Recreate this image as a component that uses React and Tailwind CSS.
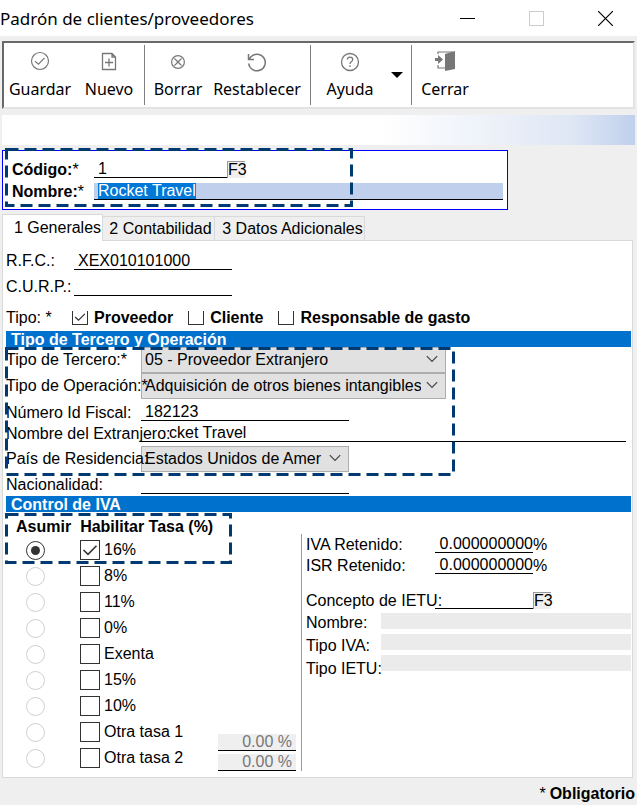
import React, { useEffect, useRef, useState } from 'react';

const RATES = ['16%', '8%', '11%', '0%', 'Exenta', '15%', '10%', 'Otra tasa 1', 'Otra tasa 2'];

function Chevron() {
  return (
    <svg viewBox="0 0 12 8" className="pointer-events-none absolute right-2 top-2 h-2 w-3" fill="none" stroke="#444" strokeWidth="1.2">
      <path d="M0.8 1.2 L6 6.4 L11.2 1.2" />
    </svg>
  );
}

function Check({ className }) {
  return (
    <svg viewBox="0 0 16 16" className={className} fill="none" stroke="#333" strokeWidth="1.6">
      <path d="M1.5 8 L6 12.3 L14.5 3.8" />
    </svg>
  );
}

function Marker({ className }) {
  return (
    <svg className={className} fill="none" aria-hidden="true">
      <rect x="0.5" y="0.5" width="100%" height="100%" stroke="#003a70" strokeWidth="3" strokeDasharray="12 6" />
    </svg>
  );
}

function Dropdown({ id, value, className }) {
  return (
    <div className={`relative h-[26px] ${className}`}>
      <select id={id} className="h-full w-full appearance-none border border-[#adadad] bg-[#e1e1e1] pl-[3px] pr-6 text-base leading-5 outline-none">
        <option>{value}</option>
      </select>
      <Chevron />
    </div>
  );
}

function LineInput({ className, ...rest }) {
  return <input {...rest} className={`h-[17px] border-b border-black leading-4 outline-none ${className}`} />;
}

function F3({ label }) {
  return (
    <button type="button" aria-label={label} className="flex h-[17px] w-[18px] items-center border-l border-t border-[#999] bg-[#efefef] leading-4">
      F3
    </button>
  );
}

function ToolButton({ label, children, className }) {
  return (
    <button type="button" className={`flex flex-col items-center font-['Noto_Sans'] leading-6 ${className}`}>
      <span className="flex h-8 items-center justify-center">{children}</span>
      {label}
    </button>
  );
}

function TypeCheck({ label, defaultChecked = false }) {
  return (
    <label className="flex items-center gap-1.5 font-bold">
      <span className="relative h-[14px] w-4">
        <input type="checkbox" defaultChecked={defaultChecked} className="peer block h-[14px] w-4 appearance-none border border-t-0 border-[#333]" />
        <Check className="pointer-events-none absolute left-0.5 top-0 hidden h-3 w-3 peer-checked:block" />
      </span>
      {label}
    </label>
  );
}

function SectionTitle({ children }) {
  return <h2 className="h-4 overflow-hidden bg-[#0072ce] pl-[5px] font-bold leading-[18px] text-white">{children}</h2>;
}

export default function App() {
  const nameRef = useRef(null);
  const [assumed, setAssumed] = useState('16%');

  useEffect(() => {
    nameRef.current.focus();
    nameRef.current.select();
  }, []);

  return (
    <div className="min-h-screen bg-[#efefef] font-['Liberation_Sans',sans-serif] text-base text-black">
      <header className="flex h-9 items-center justify-between bg-white">
        <h1 className="whitespace-nowrap pt-0.5 font-['Noto_Sans',sans-serif] text-[17px]">Padrón de clientes/proveedores</h1>
        <div className="flex items-center gap-[54px] pr-6">
          <button type="button" aria-label="Minimizar">
            <svg width="15" height="15" stroke="#000"><path d="M0 7.5H15" /></svg>
          </button>
          <button type="button" aria-label="Maximizar" disabled>
            <svg width="15" height="15" fill="none" stroke="#ccc"><rect x="0.5" y="0.5" width="14" height="14" /></svg>
          </button>
          <button type="button" aria-label="Cerrar ventana">
            <svg width="15" height="15" stroke="#000" strokeWidth="1.2"><path d="M0 0L15 15M15 0L0 15" /></svg>
          </button>
        </div>
      </header>

      <nav className="mx-0.5 mt-[5px] flex h-[68px] border-2 border-b-[#e3e3e3] border-l-[#696969] border-r-[#e3e3e3] border-t-[#696969] bg-white py-0.5">
        <div className="flex border-r border-[#808080] pl-1 pr-2">
          <ToolButton label="Guardar" className="w-16">
            <svg width="20" height="20" fill="none" stroke="#777" strokeWidth="1.2">
              <circle cx="10" cy="10" r="8.5" />
              <path d="M5 10.2L8.5 13.2L14.5 6.8" />
            </svg>
          </ToolButton>
          <ToolButton label="Nuevo" className="ml-2.5 w-[54px]">
            <svg width="16" height="20" fill="none" stroke="#777" strokeWidth="1.3">
              <path d="M1.5 2.5H11L14.5 6V18.5H1.5ZM11 2.5V6H14.5M8 7.5V15.5M4 11.5H12" />
            </svg>
          </ToolButton>
        </div>
        <div className="flex border-r border-[#808080] pl-2 pr-2">
          <ToolButton label="Borrar" className="w-[50px]">
            <svg width="16" height="16" className="mt-0.5" fill="none" stroke="#777" strokeWidth="1.2">
              <circle cx="8" cy="8" r="6.4" />
              <path d="M4.5 4.5L11.5 11.5M11.5 4.5L4.5 11.5" />
            </svg>
          </ToolButton>
          <ToolButton label="Restablecer" className="ml-[9px] w-[90px]">
            <svg width="20" height="20" className="mt-0.5" fill="none" stroke="#777" strokeWidth="1.5">
              <path d="M1.7 11.5A8.3 8.3 0 1 0 4 4.7L1.8 7.4M1.5 2V7.5H7" />
            </svg>
          </ToolButton>
        </div>
        <div className="flex border-r border-[#808080] pl-3 pr-2">
          <ToolButton label="Ayuda" className="w-[54px]">
            <svg width="20" height="20" className="mt-0.5" fill="none" stroke="#777" strokeWidth="1.3">
              <circle cx="10" cy="10" r="8.5" />
              <path d="M7.3 7.5Q7.5 5.2 10 5.2Q12.7 5.2 12.7 7.5Q12.7 8.8 11.3 9.7Q10 10.5 10 12M10 13.3V15" />
            </svg>
          </ToolButton>
          <button type="button" aria-label="Más ayuda" className="ml-3.5 w-3">
            <svg width="12" height="6"><path d="M0 0H12L6 6Z" /></svg>
          </button>
        </div>
        <ToolButton label="Cerrar" className="ml-2 w-[50px]">
          <svg width="20" height="20" fill="#777">
            <path d="M10 3L20 0V18L10 20Z" />
            <path d="M0 7H3V4L8 8.5L3 13V10H0Z" />
            <path d="M3 3V1H18M3 14V17H10" fill="none" stroke="#777" strokeWidth="1.2" />
          </svg>
        </ToolButton>
      </nav>

      <div className="mx-0.5 mt-1.5 h-[30px] bg-linear-to-r from-white from-60% via-[#dfe7f5] via-90% to-[#c0d0ec]" />

      <section className="relative mx-0.5 mt-[5px] h-[60px] max-w-[506px] border border-[#0000ff] bg-white pl-[9px] pr-1 pt-2.5">
        <div className="flex h-[22px] items-start">
          <label htmlFor="codigo" className="w-[82px] font-bold leading-[18px]"><span>Código:</span><span className="font-normal">*</span></label>
          <LineInput id="codigo" defaultValue="1" className="w-[133px] pl-1" />
          <F3 label="Buscar código F3" />
        </div>
        <div className="flex items-start">
          <label htmlFor="nombre" className="w-[82px] font-bold leading-[18px]"><span>Nombre:</span><span className="font-normal">*</span></label>
          <input
            id="nombre"
            ref={nameRef}
            defaultValue="Rocket Travel"
            className="h-[17px] min-w-0 flex-1 border-b border-black bg-[#c0d0ec] pl-1 leading-4 outline-none selection:bg-[#0078d7] selection:text-white"
          />
        </div>
        <Marker className="pointer-events-none absolute -top-0.5 left-[3px] h-[56px] w-[345px] overflow-visible" />
      </section>

      <div role="tablist" className="ml-0.5 mt-[5px] flex h-[25px] items-end whitespace-nowrap">
        <button type="button" role="tab" aria-selected="true" className="relative -mb-px h-[27px] w-[101px] border border-b-0 border-[#d9d9d9] bg-white pl-2.5 leading-6">1 Generales</button>
        <button type="button" role="tab" className="h-6 w-[112px] border-r border-t border-[#d9d9d9] pl-1 leading-6">2 Contabilidad</button>
        <button type="button" role="tab" className="h-6 w-[150px] border-r border-t border-[#d9d9d9] pl-1.5 leading-6">3 Datos Adicionales</button>
      </div>

      <main className="ml-0.5 mr-1 border border-[#d9d9d9] bg-white pb-1.5 pl-[3px] pr-px pt-[7px]">
        <div className="flex h-[26px] items-center">
          <label htmlFor="rfc" className="w-[68px]">R.F.C.:</label>
          <LineInput id="rfc" defaultValue="XEX010101000" className="w-[158px] pl-1" />
        </div>
        <div className="flex h-[26px] items-center">
          <label htmlFor="curp" className="w-[68px]">C.U.R.P.:</label>
          <LineInput id="curp" className="w-[158px] pl-1" />
        </div>
        <div className="flex h-[31px] items-center gap-[15px] pt-1">
          <span className="w-[51px]">Tipo: *</span>
          <TypeCheck label="Proveedor" defaultChecked />
          <TypeCheck label="Cliente" />
          <TypeCheck label="Responsable de gasto" />
        </div>

        <SectionTitle>Tipo de Tercero y Operación</SectionTitle>
        <section className="relative whitespace-nowrap">
          <div className="flex items-center">
            <label htmlFor="tercero" className="w-[135px]">Tipo de Tercero:*</label>
            <Dropdown id="tercero" value="05 - Proveedor Extranjero" className="w-[305px]" />
          </div>
          <div className="flex items-center">
            <label htmlFor="operacion" className="relative z-10 w-[135px]">Tipo de Operación:*</label>
            <Dropdown id="operacion" value="Adquisición de otros bienes intangibles" className="w-[305px]" />
          </div>
          <div className="mt-[3px] flex h-[21px] items-center">
            <label htmlFor="fiscal" className="w-[135px]">Número Id Fiscal:</label>
            <LineInput id="fiscal" defaultValue="182123" className="w-[208px] pl-1" />
          </div>
          <div className="flex h-[21px] items-center">
            <label htmlFor="extranjero" className="w-[135px]">Nombre del Extranjero:</label>
            <LineInput id="extranjero" defaultValue="cket Travel" className="mr-[5px] min-w-0 flex-1 pl-7" />
          </div>
          <div className="mt-0.5 flex items-center">
            <label htmlFor="pais" className="relative z-10 w-[135px]">País de Residencia:</label>
            <Dropdown id="pais" value="Estados Unidos de Amer" className="w-[208px]" />
          </div>
          <div className="flex h-6 items-end pb-0.5">
            <label htmlFor="nacionalidad" className="w-[135px] leading-[18px]">Nacionalidad:</label>
            <LineInput id="nacionalidad" className="w-[208px]" />
          </div>
          <Marker className="pointer-events-none absolute left-0 top-px z-20 h-[126px] w-[447px] overflow-visible" />
        </section>

        <SectionTitle>Control de IVA</SectionTitle>
        <section className="relative flex">
          <div className="flex w-[295px] justify-between pr-[5px]">
            <div className="whitespace-nowrap">
              <div className="flex h-[25px] items-center gap-[9px] pl-2.5 pt-1 font-bold">
                <span>Asumir</span>
                <span>Habilitar Tasa (%)</span>
              </div>
              {RATES.map((rate) => (
                <div key={rate} className="flex h-[26px] items-center pl-5">
                  <input
                    type="radio"
                    name="asumir"
                    aria-label={`Asumir ${rate}`}
                    checked={assumed === rate}
                    onChange={() => setAssumed(rate)}
                    className="h-[19px] w-[19px] appearance-none rounded-full border border-[#d0d0d0] bg-white bg-clip-content p-1 checked:border-[#333] checked:bg-[#333]"
                  />
                  <label className="ml-[35px] flex items-center gap-1">
                    <span className="relative h-5 w-5">
                      <input type="checkbox" defaultChecked={rate === '16%'} className="peer block h-5 w-5 appearance-none border border-[#333] bg-white" />
                      <Check className="pointer-events-none absolute left-0.5 top-0.5 hidden h-4 w-4 peer-checked:block" />
                    </span>
                    {rate}
                  </label>
                </div>
              ))}
            </div>
            <div className="-ml-20 flex w-[78px] flex-col justify-end gap-[3px]">
              <LineInput aria-label="Otra tasa 1 (%)" disabled defaultValue="0.00 %" className="w-full bg-[#efefef] pr-1 text-right text-[#777]" />
              <LineInput aria-label="Otra tasa 2 (%)" disabled defaultValue="0.00 %" className="w-full bg-[#efefef] pr-1 text-right text-[#777]" />
            </div>
          </div>

          <div className="mt-[22px] min-w-0 flex-1 whitespace-nowrap border-l border-[#999] pl-1">
            <div className="flex h-[21px] items-center">
              <label htmlFor="iva" className="w-[129px]">IVA Retenido:</label>
              <LineInput id="iva" defaultValue="0.000000000" className="w-[98px] text-right" />
              <span>%</span>
            </div>
            <div className="flex h-[21px] items-center">
              <label htmlFor="isr" className="w-[129px]">ISR Retenido:</label>
              <LineInput id="isr" defaultValue="0.000000000" className="w-[98px] text-right" />
              <span>%</span>
            </div>
            <div className="mt-3.5 flex h-[21px] items-center">
              <label htmlFor="ietu" className="w-[129px]">Concepto de IETU:</label>
              <LineInput id="ietu" className="w-[98px]" />
              <F3 label="Buscar concepto F3" />
            </div>
            <div className="flex">
              <div className="flex w-[75px] flex-col leading-[23px]">
                <label htmlFor="ietu-nombre">Nombre:</label>
                <label htmlFor="ietu-iva">Tipo IVA:</label>
                <label htmlFor="ietu-tipo">Tipo IETU:</label>
              </div>
              <div className="flex min-w-0 flex-1 flex-col gap-[5px] pt-0.5">
                <input id="ietu-nombre" disabled className="h-4 bg-[#ebebeb]" />
                <input id="ietu-iva" disabled className="h-4 bg-[#ebebeb]" />
                <input id="ietu-tipo" disabled className="h-4 bg-[#ebebeb]" />
              </div>
            </div>
          </div>
          <Marker className="pointer-events-none absolute left-0 top-0.5 h-[48px] w-[224px] overflow-visible" />
        </section>
      </main>

      <footer className="flex h-[27px] items-center justify-end gap-1 pr-0.5 pt-1">
        <span>*</span>
        <span className="font-bold">Obligatorio</span>
      </footer>
    </div>
  );
}
